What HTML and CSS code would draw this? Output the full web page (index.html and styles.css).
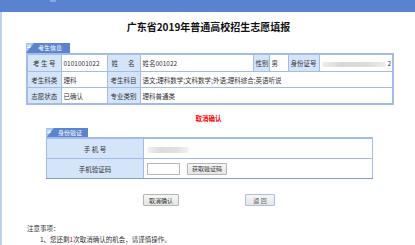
FILE: index.html
```html
<!DOCTYPE html>
<html lang="zh">
<head>
<meta charset="utf-8">
<title>广东省2019年普通高校招生志愿填报</title>
<link rel="stylesheet" href="styles.css">
</head>
<body>
<div class="topbar"><span class="topmark"></span></div>
<div class="page">
  <h1 class="title">广东省2019年普通高校招生志愿填报</h1>

  <div class="sec sec1">
    <div class="tab"><svg class="tabicon" width="8" height="10" viewBox="0 0 8 10"><polygon points="0,0 8,0 0,10" fill="#a9c2ee"/><path d="M1 1.5 L4 4.5 M4 1.5 L4 4.5 L1 4.5" stroke="#fff" stroke-width="0.9" fill="none"/></svg><span>考生信息</span></div>
    <table class="info">
      <colgroup>
        <col style="width:34px"><col style="width:46px"><col style="width:33px"><col style="width:113px">
        <col style="width:16px"><col style="width:19px"><col style="width:31px"><col style="width:74px">
      </colgroup>
      <tr class="r1">
        <td class="lbl">考 生 号</td><td>0101001022</td>
        <td class="lbl just"><span>姓</span><span>名</span></td><td>姓名001022</td>
        <td class="lbl">性别</td><td>男</td>
        <td class="lbl">身份证号</td><td class="idcell"><span class="blur idblur"></span><span class="idend">2</span></td>
      </tr>
      <tr>
        <td class="lbl">考生科类</td><td>理科</td>
        <td class="lbl">考生科目</td><td colspan="5">语文;理科数学;文科数学;外语;理科综合;英语听说</td>
      </tr>
      <tr>
        <td class="lbl">志愿状态</td><td>已确认</td>
        <td class="lbl">专业类别</td><td colspan="5">理科普通类</td>
      </tr>
    </table>
  </div>

  <p class="alert">取消确认</p>

  <div class="sec sec2">
    <div class="tab tab2"><svg class="tabicon" width="8" height="10" viewBox="0 0 8 10"><polygon points="0,0 8,0 0,10" fill="#a9c2ee"/><path d="M1 1.5 L4 4.5 M4 1.5 L4 4.5 L1 4.5" stroke="#fff" stroke-width="0.9" fill="none"/></svg><span>身份验证</span></div>
    <table class="verify">
      <colgroup><col style="width:97px"><col style="width:229px"></colgroup>
      <tr>
        <td class="lbl">手 机 号</td>
        <td><span class="blur phoneblur"></span></td>
      </tr>
      <tr>
        <td class="lbl">手机验证码</td>
        <td><div class="codeline"><span class="codeinput"></span><span class="btn getcode">获取验证码</span></div></td>
      </tr>
    </table>
  </div>

  <div class="actions">
    <span class="btn act cancel">取消确认</span>
    <span class="btn act back">返 回</span>
  </div>

  <div class="notes">
    <p class="nhead">注意事项：</p>
    <p class="nitem">1、您还剩<span class="red">1</span>次取消确认的机会，请谨慎操作。</p>
    <p class="nitem red">2、取消确认后须重新确认志愿，否则志愿无效，请考生务必在规定时间内完成确认。</p>
  </div>
</div>
</body>
</html>
```

FILE: styles.css
```css
html, body {
  margin: 0;
  padding: 0;
  background: #fff;
}
body {
  font-family: "Noto Sans CJK SC", "Noto Sans", sans-serif;
  color: #333;
  overflow: hidden;
}
.topbar {
  height: 12px;
  background: #5a83cf;
  position: relative;
}
.topmark {
  position: absolute;
  left: 50px;
  top: 0;
  width: 6px;
  height: 2px;
  background: #8aa7e0;
}
.page {
  border-left: 2px solid #bcd0f1;
  height: 233px;
  overflow: hidden;
}
.title {
  margin: 8px 0 0;
  text-align: center;
  font-size: 10px;
  line-height: 14px;
  font-weight: bold;
  color: #111;
}
.sec1 {
  margin: 9px 0 0 24px;
  width: 366px;
}
.sec2 {
  margin: 5px 0 0 44px;
  width: 326px;
}
.tab {
  display: flex;
  align-items: center;
  width: 44px;
  height: 10px;
  background: #5b84cf;
  color: #fff;
  font-size: 6px;
  line-height: 10px;
}
.tab2 {
  width: 42px;
  height: 9px;
}
.tabicon {
  flex: none;
  margin-right: 4px;
}
table {
  border-collapse: collapse;
  table-layout: fixed;
  font-size: 6.5px;
  color: #333;
}
.info {
  width: 366px;
  border: 2px solid #a3bbe6;
}
.info td {
  border: 1px solid #a3bbe6;
  height: 15px;
  padding: 0 2px;
  white-space: nowrap;
  overflow: hidden;
}
.info tr.r1 td {
  height: 16px;
}
td.lbl {
  background: #d4e4f9;
  text-align: center;
}
td.just {
  display: table-cell;
}
td.just span:first-child {
  float: left;
  margin-left: 2px;
}
td.just span:last-child {
  float: right;
  margin-right: 3px;
}
.idcell {
  position: relative;
}
.blur {
  display: inline-block;
  vertical-align: middle;
  border-radius: 3px;
  background: linear-gradient(90deg, #eee, #d8d8d8 30%, #dcdcdc 70%, #eee);
}
.idblur {
  width: 64px;
  height: 5px;
}
.idend {
  margin-left: 2px;
}
.alert {
  margin: 8px 0 0;
  text-align: center;
  color: #f00;
  font-size: 6.5px;
  line-height: 10px;
  font-weight: bold;
}
.verify {
  width: 326px;
  border-top: 2px solid #a3bbe6;
  border-left: 1px solid #7d9bd6;
  border-right: 1px solid #8ea8dc;
  border-bottom: 1px solid #7d9bd6;
}
.verify td {
  border: 1px solid #a3bbe6;
  height: 19px;
  padding: 0 3px;
}
.verify tr:last-child td {
  border-bottom: 1px solid #7d9bd6;
}
.phoneblur {
  width: 42px;
  height: 6px;
  background: linear-gradient(90deg, #f2f2f2, #dcdcdc 30%, #e0e0e0 70%, #f2f2f2);
}
.codeline {
  display: flex;
  align-items: center;
  gap: 7px;
}
.codeinput {
  display: block;
  width: 31px;
  height: 10px;
  border: 1px solid #b8b8b8;
  background: #fff;
}
.btn {
  display: inline-flex;
  align-items: center;
  justify-content: center;
  box-sizing: border-box;
  border: 1px solid #b5b5b5;
  background: linear-gradient(#f6f6f6, #e6e6e6);
  color: #333;
  font-size: 6px;
  border-radius: 1px;
}
.getcode {
  width: 40px;
  height: 12px;
}
.actions {
  display: flex;
  margin: 15px 0 0 141px;
  gap: 66px;
}
.act {
  height: 12px;
}
.cancel {
  width: 36px;
}
.back {
  width: 30px;
  border-color: #a9c0ea;
  color: #666;
}
.notes {
  margin: 17px 0 0 25px;
  font-size: 6.5px;
  color: #333;
}
.notes p {
  margin: 0;
  line-height: 11px;
  white-space: nowrap;
}
.nitem {
  padding-left: 13px;
}
.red {
  color: #f00;
}
```
